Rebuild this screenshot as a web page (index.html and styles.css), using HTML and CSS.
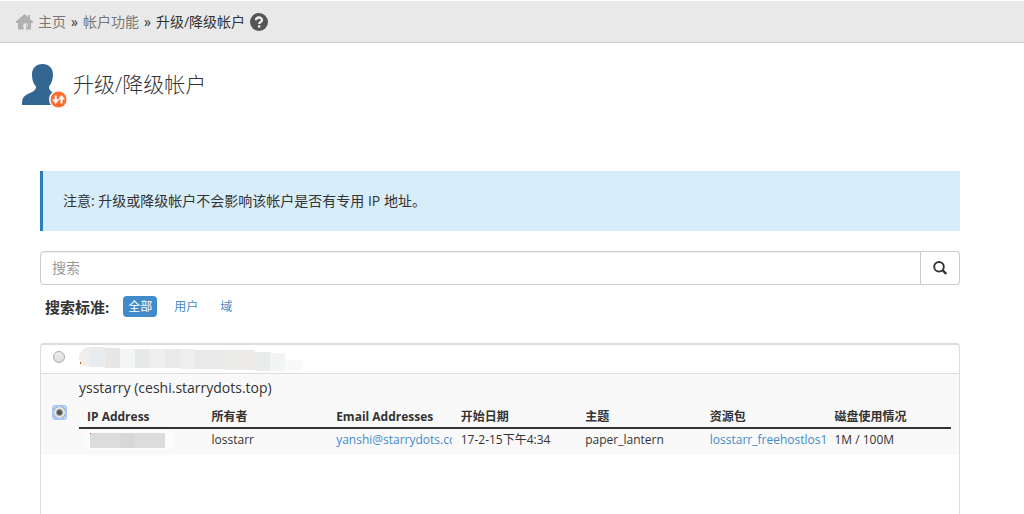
FILE: index.html
```html
<!DOCTYPE html>
<html lang="zh-CN">
<head>
<meta charset="utf-8">
<title>升级/降级帐户</title>
<link rel="stylesheet" href="styles.css">
</head>
<body>
<nav class="breadcrumb" aria-label="breadcrumb">
  <svg class="home-icon" viewBox="0 0 17 16" aria-hidden="true"><path fill="#b0b0b0" d="M8.500 0 0 7.500V9h2v6.500h5.500V11H10v4.500h5V9h2V7.500L14 5V1h-2v2z"/><path fill="#e9e9e9" d="M7.500 9.500H12V13H7.500z"/><path fill="#b0b0b0" d="M10 10.500h1.500v2H10z"/></svg>
  <a class="crumb" href="#">主页</a>
  <span class="sep">»</span>
  <a class="crumb" href="#">帐户功能</a>
  <span class="sep">»</span>
  <span class="current">升级/降级帐户</span>
  <a class="help" href="#" aria-label="帮助"><svg viewBox="0 0 18 18" aria-hidden="true"><circle cx="9" cy="9" r="9" fill="#555"/><path d="M6 7.200C6 3.600 12 3.700 12 7c0 2-2.800 2-2.800 4" fill="none" stroke="#eee" stroke-width="2.300"/><rect x="8" y="12.300" width="2.400" height="2.300" fill="#eee"/></svg></a>
</nav>
<main class="content">
  <header class="title">
    <svg class="user-icon" viewBox="0 0 48 48" aria-hidden="true">
      <path fill="#336791" d="M21.500 2C28 2 32 6.500 32 12.500c0 5-1.500 9-4 12 0 3 1 4.500 4 6 5 2.500 8.500 4 9 12.500H1c0-6 1-8.500 5-10.500 5-2.500 9-3.500 9-8-3-3-4-7-4-12C11 6.500 15 2 21.500 2z"/>
      <circle cx="37.500" cy="37.500" r="9.500" fill="#fff"/><circle cx="37.500" cy="37.500" r="8" fill="#ff6c2c"/>
      <path d="M34.700 33.500v7M40.500 41.500v-7" fill="none" stroke="#fff" stroke-width="2"/>
      <path d="M31.200 37.500h7l-3.500 4.500zM37 37.500h7L40.500 33z" fill="#fff"/>
    </svg>
    <h1>升级/降级帐户</h1>
  </header>
  <section class="panel">
    <p class="notice">注意: 升级或降级帐户不会影响该帐户是否有专用 IP 地址。</p>
    <form class="search">
      <input class="search-input" type="text" placeholder="搜索" aria-label="搜索">
      <button class="search-btn" type="button" aria-label="搜索"><svg viewBox="0 0 14 14" aria-hidden="true"><circle cx="6" cy="5.800" r="4.800" fill="none" stroke="#333" stroke-width="1.900"/><path d="M9.500 9.200 13.300 13" stroke="#333" stroke-width="2.400"/></svg></button>
    </form>
    <div class="filters">
      <span class="filters-label">搜索标准:</span>
      <button class="filter active" type="button">全部</button>
      <button class="filter" type="button">用户</button>
      <button class="filter" type="button">域</button>
    </div>
    <div class="list">
      <div class="row">
        <input class="radio" type="radio" name="account" aria-label="帐户 1">
        <svg class="mosaic" viewBox="0 0 228 26" aria-hidden="true">
          <path fill="#f0eeed" d="M11 1C3 1 0 7 0 12s4 9 11 9z"/>
          <path fill="#e9ecee" d="M11 1h15v20H11z"/><path fill="#e9e7e5" d="M26 2h15v20H26z"/>
          <path fill="#f5f5f5" d="M41 3h15v19H41z"/><path fill="#e6e9e9" d="M56 3h15v19H56z"/>
          <path fill="#eee" d="M71 3h15v19H71z"/><path fill="#e9ebea" d="M86 3h15v19H86z"/>
          <path fill="#eee" d="M101 3h15v20h-15z"/><path fill="#ebe9e7" d="M116 4h15v19h-15z"/>
          <path fill="#e7eae9" d="M131 4h15v19h-15z"/><path fill="#ecebea" d="M146 4h30v20h-30z"/>
          <path fill="#e9ecea" d="M176 6h15v19h-15z"/><path fill="#f2f5f3" d="M191 7h15v18h-15z"/>
          <path fill="#f9f9f9" d="M206 14h18q2 8-5 10l-13 1z"/>
          <path fill="#b4621f" d="M1 16h1v2H1z"/>
        </svg>
      </div>
      <div class="row selected">
        <input class="radio" type="radio" name="account" id="ysstarry" checked>
        <div class="account">
          <label class="account-name" for="ysstarry">ysstarry (ceshi.starrydots.top)</label>
          <table class="details">
            <thead><tr><th>IP Address</th><th>所有者</th><th>Email Addresses</th><th>开始日期</th><th>主题</th><th>资源包</th><th>磁盘使用情况</th></tr></thead>
            <tbody><tr>
              <td><svg class="ip" viewBox="0 0 92 20" aria-hidden="true"><rect width="92" height="20" rx="8" fill="#fcfcfc"/><path fill="#dcdcdc" d="M7 3h75v15H7z"/><path fill="#d8d8d8" d="M37 3h15v15H37z"/><path fill="#b85050" d="M7 3h1v1H7z"/></svg></td>
              <td>losstarr</td>
              <td><a class="clip" href="#">yanshi@starrydots.com</a></td>
              <td>17-2-15下午4:34</td>
              <td>paper_lantern</td>
              <td><a href="#">losstarr_freehostlos1</a></td>
              <td>1M / 100M</td>
            </tr></tbody>
          </table>
        </div>
      </div>
    </div>
  </section>
</main>
</body>
</html>
```
FILE: styles.css
```css
* { box-sizing: border-box; }
body {
  margin: 0;
  min-height: 100vh;
  display: flex;
  flex-direction: column;
  background: #fff;
  color: #333;
  font: 14px/20px "Open Sans", "Noto Sans CJK SC", sans-serif;
}
button, input { font: inherit; color: inherit; }
a { color: #428bca; text-decoration: none; }
.breadcrumb {
  display: flex;
  align-items: center;
  gap: 5px;
  height: 43px;
  padding: 0 16px;
  background: #e9e9e9;
  border-top: 1px solid #fff;
  border-bottom: 1px solid #ccc;
}
.home-icon { width: 17px; height: 16px; }
.crumb { color: #777; }
.current { color: #333; }
.help { display: flex; }
.help svg { width: 18px; height: 18px; }
.content { flex: 1; display: flex; flex-direction: column; }
.title { display: flex; align-items: center; gap: 4px; padding: 19px 21px 0; }
.user-icon { width: 48px; height: 48px; }
h1 { margin: 0; font-size: 21px; line-height: 28px; font-weight: 300; padding-bottom: 5px; }
.panel { flex: 1; display: flex; flex-direction: column; padding: 61px 64px 0 40px; }
.notice { margin: 0; padding: 20px; background: #d7edfa; border-left: 3px solid #2980b9; }
.search { display: flex; height: 34px; margin-top: 20px; }
.search-input {
  flex: 1;
  min-width: 0;
  padding: 6px 11px;
  border: 1px solid #ccc;
  border-radius: 4px 0 0 4px;
  box-shadow: inset 0 1px 1px rgba(0, 0, 0, .075);
}
.search-input::placeholder { color: #999; opacity: 1; }
.search-btn {
  width: 39px;
  padding: 0;
  display: flex;
  align-items: center;
  justify-content: center;
  background: #fff;
  border: 1px solid #ccc;
  border-left: 0;
  border-radius: 0 4px 4px 0;
}
.search-btn svg { width: 14px; height: 14px; }
.filters { display: flex; align-items: center; gap: 12px; margin-top: 11px; padding-left: 5px; }
.filters-label { margin-right: 2px; font-size: 15px; font-weight: 700; }
.filter {
  padding: 0 5px;
  border: 0;
  border-radius: 4px;
  background: none;
  color: #428bca;
  font-size: 12px;
  line-height: 21px;
}
.filter.active { background: #428bca; color: #fff; }
.list {
  flex: 1;
  margin-top: 26px;
  border: 1px solid #ddd;
  border-top-width: 2px;
  border-bottom: 0;
  border-radius: 4px 4px 0 0;
}
.row { display: flex; align-items: center; gap: 14px; padding: 1px 8px 1px 12px; }
.selected { gap: 13px; padding: 4px 8px 4px 12px; background: #f9f9f9; border-top: 1px solid #ddd; }
.radio {
  appearance: none;
  flex: none;
  width: 12px;
  height: 12px;
  margin: 0 0 4px;
  border: 1px solid #aaa;
  border-radius: 50%;
  background: linear-gradient(#eee, #ddd);
}
.selected .radio {
  width: 13px;
  height: 13px;
  padding: 0;
  border: 1px solid #a5c7fe;
  border-radius: 2px;
  box-shadow: 0 0 0 1px #a5c7fe;
  background: radial-gradient(circle, #555 2px, #e4e4e4 4px, #e4e4e4 5px, #a0a0a0 6px, #d5e2f8 7px);
}
.mosaic { width: 228px; height: 26px; }
.account { flex: 1; min-width: 0; }
.account-name { display: block; }
.details { width: 100%; table-layout: fixed; border-collapse: collapse; margin-top: 6px; font-size: 12px; line-height: 20px; }
.details th { padding: 3px 0 0 8px; text-align: left; border-bottom: 2px solid #333; white-space: nowrap; }
.details td { height: 22px; padding: 1px 0 1px 8px; vertical-align: middle; white-space: nowrap; }
.clip { display: block; overflow: hidden; margin-right: 8px; }
.details td:nth-child(3) .clip { margin-right: 1px; }
.ip { display: block; width: 92px; height: 20px; margin-left: -4px; }
```
